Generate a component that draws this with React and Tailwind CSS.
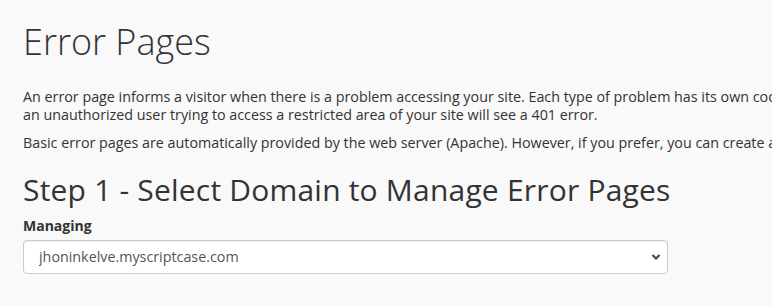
export default function App() {
  return (
    <div className="h-[306px] w-full overflow-hidden bg-[#f9f9f9] font-['Open_Sans',sans-serif] text-[#333]">
      <div className="w-[1300px] px-[23px] pt-[18px]">
        <h1 className="text-[36px] font-light leading-[48px] text-[#333]">Error Pages</h1>

        <p className="mt-[22px] whitespace-nowrap text-[14.3px] leading-[18px]">
          An error page informs a visitor when there is a problem accessing your site. Each type of problem has its own code. For example, a visitor who enters a nonexistent URL will see a 404 error, while
          <br />
          an unauthorized user trying to access a restricted area of your site will see a 401 error.
        </p>
        <p className="mt-[10px] whitespace-nowrap text-[14.3px] leading-[18px]">
          Basic error pages are automatically provided by the web server (Apache). However, if you prefer, you can create a custom error page for any valid HTTP status code beginning in 4 or 5.
        </p>

        <h2 className="mt-[18px] text-[30px] font-normal leading-[40px] tracking-[0.2px] text-[#333]">
          Step 1 - Select Domain to Manage Error Pages
        </h2>

        <label className="mt-[7px] block text-[14px] font-bold leading-[18px]">Managing</label>

        <div className="relative mt-[5px] w-[645px]">
          <select
            defaultValue="jhoninkelve.myscriptcase.com"
            className="h-[34px] w-full appearance-none rounded-[4px] border border-[#ccc] bg-white pl-[15px] pr-8 text-[14.3px] text-[#555] shadow-[inset_0_1px_1px_rgba(0,0,0,0.075)] outline-none"
          >
            <option>jhoninkelve.myscriptcase.com</option>
          </select>
          <svg
            className="pointer-events-none absolute right-[7px] top-[12px] h-[10px] w-[10px] text-[#444]"
            viewBox="0 0 10 10"
            fill="none"
            stroke="currentColor"
            strokeWidth="2"
          >
            <path d="M1.5 3 L5 6.5 L8.5 3" />
          </svg>
        </div>
      </div>
    </div>
  );
}
